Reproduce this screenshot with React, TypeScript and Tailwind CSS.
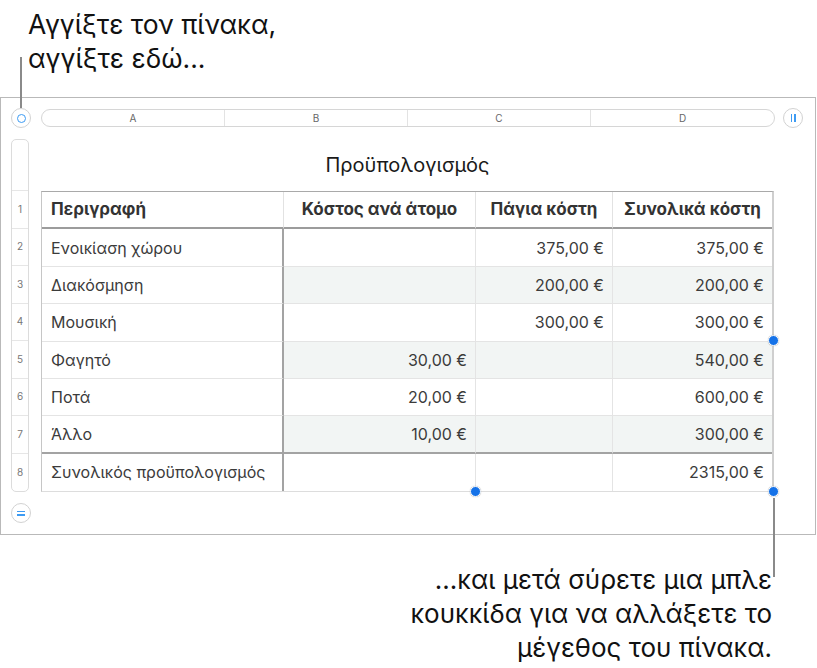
import React from 'react';

const rows: string[][] = [
  ['Ενοικίαση χώρου', '', '375,00 €', '375,00 €'],
  ['Διακόσμηση', '', '200,00 €', '200,00 €'],
  ['Μουσική', '', '300,00 €', '300,00 €'],
  ['Φαγητό', '30,00 €', '', '540,00 €'],
  ['Ποτά', '20,00 €', '', '600,00 €'],
  ['Άλλο', '10,00 €', '', '300,00 €'],
];

const headers = ['Περιγραφή', 'Κόστος ανά άτομο', 'Πάγια κόστη', 'Συνολικά κόστη'];
const footer = ['Συνολικός προϋπολογισμός', '', '', '2315,00 €'];

function Handle({ className }: { className: string }) {
  return (
    <span
      className={`absolute w-[11px] h-[11px] rounded-full bg-[#1572e8] border-[1.5px] border-white shadow-[0_0_1px_rgba(0,0,0,0.35)] ${className}`}
    />
  );
}

function RoundButton({ children }: { children: React.ReactNode }) {
  return (
    <div className="w-[20px] h-[20px] rounded-full bg-white border border-[#d2d2d2] flex items-center justify-center shrink-0">
      {children}
    </div>
  );
}

export default function App() {
  return (
    <div className="relative w-[817px] h-[668px] bg-white text-[#111] font-['Inter','Liberation_Sans',Arial,sans-serif] overflow-hidden">
      {/* top callout */}
      <div className="h-[97px] pl-[28px] pt-[7px] text-[26.5px] leading-[34px]">
        <div>Αγγίξτε τον πίνακα,</div>
        <div>αγγίξτε εδώ...</div>
      </div>

      {/* table frame */}
      <div className="w-[816px] h-[438px] border border-[#b9b9b9] pl-[10px] pt-[10px]">
        <div className="flex items-center">
          <RoundButton>
            <span className="w-[9px] h-[9px] rounded-full border-[1.5px] border-[#3d9bf3]" />
          </RoundButton>
          <div className="ml-[10px] w-[734px] h-[18px] rounded-full border border-[#d6d6d6] grid grid-cols-4 text-[10px] text-[#666] overflow-hidden">
            {['A', 'B', 'C', 'D'].map((c, i) => (
              <div
                key={c}
                className={`flex items-center justify-center ${i < 3 ? 'border-r border-[#e3e3e3]' : ''}`}
              >
                {c}
              </div>
            ))}
          </div>
          <div className="ml-[8px]">
            <RoundButton>
              <span className="flex gap-[2px]">
                <span className="w-[1.5px] h-[8px] bg-[#3d9bf3]" />
                <span className="w-[1.5px] h-[8px] bg-[#3d9bf3]" />
              </span>
            </RoundButton>
          </div>
        </div>

        <div className="flex mt-[11px]">
          {/* row headers */}
          <div className="w-[20px] shrink-0">
            <div className="w-[18px] h-[353px] rounded-[5px] border border-[#dcdcdc] flex flex-col overflow-hidden">
              <div className="h-[51px] border-b border-[#e6e6e6]" />
              <div className="flex-1 grid grid-rows-8">
                {[1, 2, 3, 4, 5, 6, 7, 8].map((n) => (
                  <div
                    key={n}
                    className={`flex items-center justify-center text-[10px] text-[#777] ${n < 8 ? 'border-b border-[#e6e6e6]' : ''}`}
                  >
                    {n}
                  </div>
                ))}
              </div>
            </div>
          </div>

          {/* table */}
          <div className="ml-[10px]">
            <div className="h-[52px] w-[733px] flex items-center justify-center text-[20px] text-[#1a1a1a] pb-[1px]">
              Προϋπολογισμός
            </div>
            <div className="w-[733px] h-[301px] grid grid-cols-[242px_192px_137px_1fr] grid-rows-8 border-t border-t-[#a9a9a9] border-l border-l-[#c6c6c6] border-r-2 border-r-[#cfcfcf] border-b border-b-[#dddddd] text-[16px]">
              {headers.map((h, i) => (
                <div
                  key={h}
                  className={`flex items-center px-[9px] text-[17px] font-bold text-[#333] border-b-2 border-b-[#9c9c9c] ${i > 0 ? 'justify-center' : ''} ${i < 3 ? 'border-r border-r-[#e2e2e2]' : ''}`}
                >
                  {h}
                </div>
              ))}
              {rows.map((r, ri) =>
                r.map((v, ci) => {
                  const band = ri % 2 === 1 && ci > 0;
                  const lastBody = ri === rows.length - 1;
                  return (
                    <div
                      key={`${ri}-${ci}`}
                      className={[
                        'flex items-center pl-[9px] pr-[8px] text-[#3b3b3b]',
                        ci > 0 ? 'justify-end' : '',
                        band ? 'bg-[#f2f5f4]' : 'bg-white',
                        ci === 0 ? 'border-r-2 border-r-[#a3a3a3]' : ci < 3 ? 'border-r border-r-[#e4e4e4]' : '',
                        lastBody ? 'border-b-2 border-b-[#a3a3a3]' : 'border-b border-b-[#e4e4e4]',
                      ].join(' ')}
                    >
                      {v}
                    </div>
                  );
                })
              )}
              {footer.map((v, ci) => (
                <div
                  key={`f-${ci}`}
                  className={`flex items-center pl-[9px] pr-[8px] text-[#3b3b3b] ${ci > 0 ? 'justify-end' : ''} ${ci === 0 ? 'border-r-2 border-r-[#a3a3a3]' : ci < 3 ? 'border-r border-r-[#e4e4e4]' : ''}`}
                >
                  {v}
                </div>
              ))}
            </div>
          </div>
        </div>

        <div className="mt-[11px]">
          <RoundButton>
            <span className="flex flex-col gap-[2px]">
              <span className="w-[8px] h-[1.5px] bg-[#3d9bf3]" />
              <span className="w-[8px] h-[1.5px] bg-[#3d9bf3]" />
            </span>
          </RoundButton>
        </div>
      </div>

      {/* bottom callout */}
      <div className="mt-[28px] pr-[45px] text-right text-[26px] leading-[34px]">
        <div>...και μετά σύρετε μια μπλε</div>
        <div>κουκκίδα για να αλλάξετε το</div>
        <div>μέγεθος του πίνακα.</div>
      </div>

      {/* leader lines */}
      <span className="absolute left-[20px] top-[57px] w-[2px] h-[51px] bg-[#8a8a8a]" />
      <span className="absolute left-[773px] top-[498px] w-[2px] h-[79px] bg-[#8a8a8a]" />

      {/* resize handles */}
      <Handle className="left-[768px] top-[335px]" />
      <Handle className="left-[470px] top-[486px]" />
      <Handle className="left-[768px] top-[486px]" />
    </div>
  );
}
